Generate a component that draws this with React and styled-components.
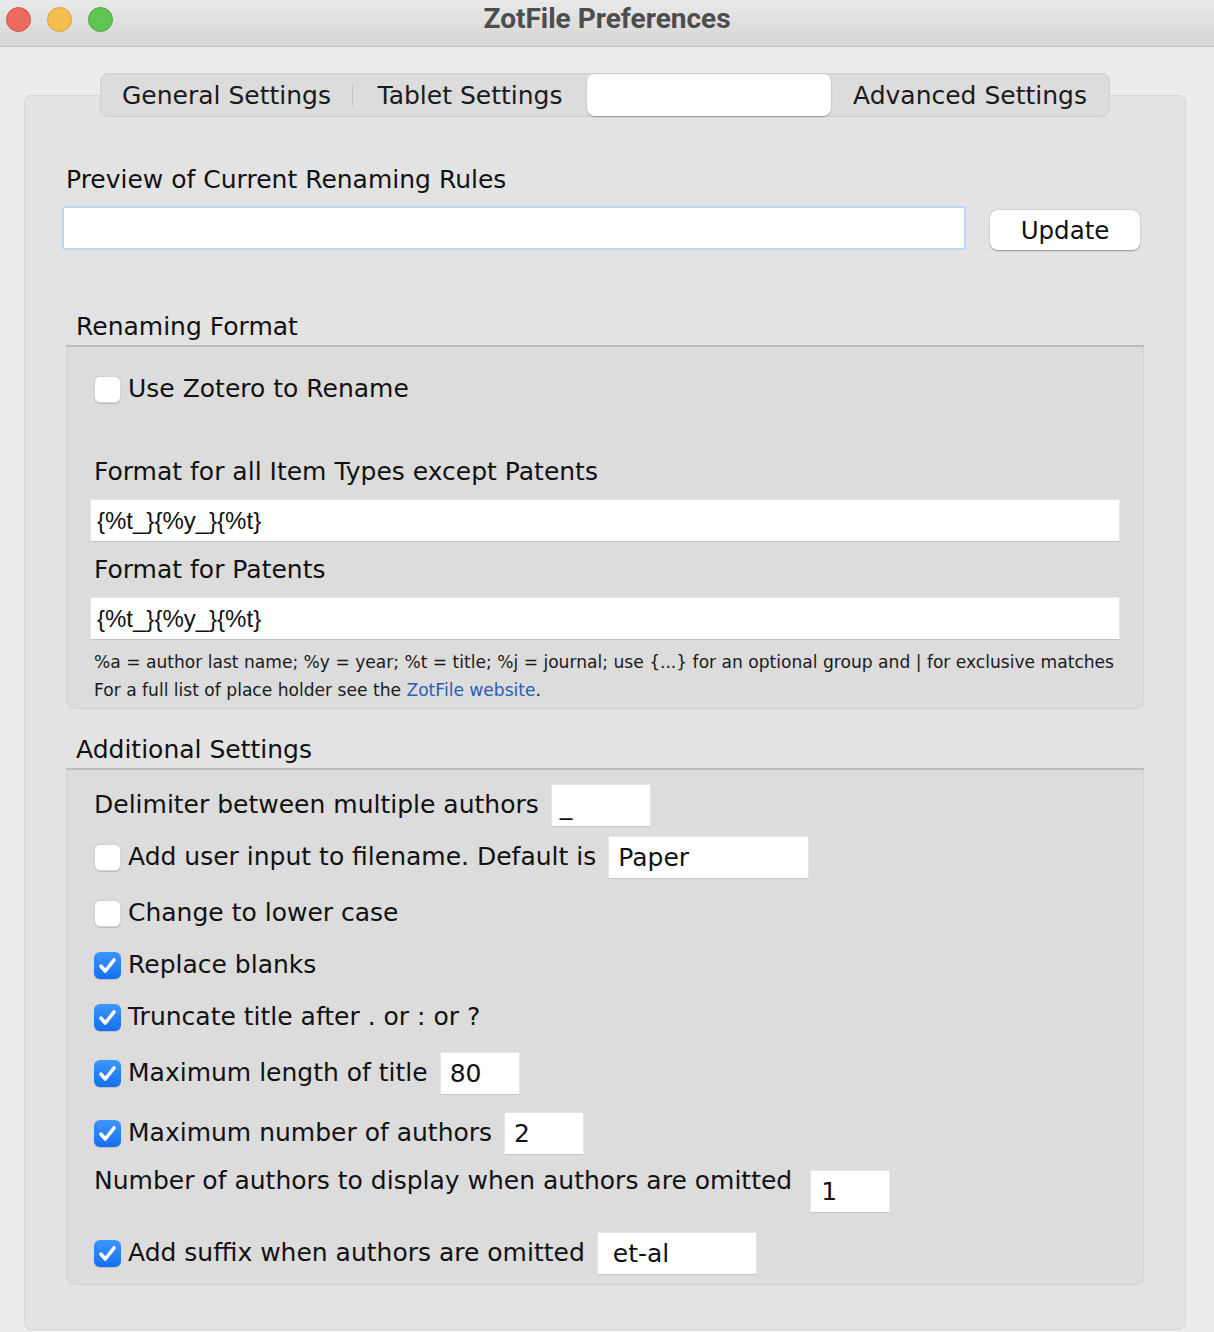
import styled, { createGlobalStyle } from "styled-components";

const GlobalStyle = createGlobalStyle`
    body {
        margin: 0;
        background: #ececec;
        font-family: "DejaVu Sans", "Noto Sans", sans-serif;
        color: #111;
    }
`;

const Window = styled.div`
    width: 1214px;
    height: 1332px;
    overflow: hidden;
    background: #ececec;
`;

const TitleBar = styled.div`
    height: 46px;
    display: grid;
    grid-template-columns: 1fr auto 1fr;
    align-items: center;
    background: linear-gradient(#e9e9e9, #d5d5d5);
    border-bottom: 1px solid #c6c6c6;
`;

const Lights = styled.div`
    display: flex;
    gap: 16px;
    padding-left: 6px;
    margin-top: -8px;
`;

const Light = styled.span`
    width: 23px;
    height: 23px;
    border-radius: 50%;
    background: ${(p) => p.$color};
    border: 0.5px solid ${(p) => p.$edge};
`;

const Title = styled.div`
    font-family: Roboto, "Liberation Sans", sans-serif;
    font-weight: 700;
    font-size: 28px;
    color: #4d4d4d;
    margin-top: -9px;
`;

const Panel = styled.div`
    box-sizing: border-box;
    margin: 48px 28px 0 24px;
    height: 1235px;
    background: #e3e3e3;
    border: 1px solid #d6d6d6;
    border-radius: 7px;
`;

const TabRow = styled.div`
    display: flex;
    justify-content: center;
    margin-top: -23px;
`;

const TabBar = styled.div`
    display: flex;
    align-items: center;
    height: 42px;
    background: #dcdcdc;
    border: 1px solid #cfcfcf;
    border-radius: 8px;
`;

const Tab = styled.div`
    height: 42px;
    display: flex;
    align-items: center;
    justify-content: center;
    box-sizing: border-box;
    width: ${(p) => p.$w}px;
    font-size: 25px;
    color: #1a1a1a;
    ${(p) =>
        p.$active &&
        `
        background: #fff;
        border-radius: 8px;
        box-shadow: 0 1px 1.5px rgba(0,0,0,0.3);
    `}
`;

const TabDivider = styled.span`
    width: 1px;
    height: 22px;
    background: #c4c4c4;
`;

const Content = styled.div`
    padding: 0 41px;
`;

const Label = styled.div`
    font-size: 25px;
    line-height: 30px;
    margin-top: ${(p) => p.$mt || 0}px;
    padding-left: ${(p) => p.$pl || 0}px;
    white-space: nowrap;
`;

const PreviewRow = styled.div`
    display: flex;
    align-items: flex-end;
    margin: 11px 4px 0 -4px;
`;

const PreviewInput = styled.div`
    flex: 1;
    height: 44px;
    box-sizing: border-box;
    background: #fff;
    border: 2px solid #bcd6f4;
    border-radius: 3px;
`;

const Button = styled.div`
    width: 150px;
    height: 40px;
    margin-left: 24px;
    display: flex;
    align-items: center;
    justify-content: center;
    background: #fff;
    border-radius: 8px;
    box-shadow: 0 0.5px 1.5px rgba(0, 0, 0, 0.35);
    font-size: 24.5px;
`;

const SectionHeader = styled.div`
    margin-top: ${(p) => p.$mt}px;
    padding: 0 10px 3px;
    font-size: 25px;
    line-height: 30px;
    border-bottom: 2px solid #bdbdbd;
`;

const Group = styled.div`
    background: #dcdcdc;
    border: 1px solid #d2d2d2;
    border-top: none;
    border-radius: 0 0 8px 8px;
    padding: ${(p) => p.$pad};
`;

const FormatInput = styled.div`
    margin-top: 12px;
    height: 43px;
    box-sizing: border-box;
    background: #fff;
    border: 1px solid #e6e6e6;
    border-bottom-color: #c4c4c4;
    padding-left: 6px;
    display: flex;
    align-items: center;
    font-family: "Liberation Sans", Arial, sans-serif;
    font-size: 24px;
`;

const Hint = styled.div`
    margin-top: 8px;
    padding-left: 4px;
    font-size: 17.1px;
    line-height: 28px;
    color: #1a1a1a;
    white-space: nowrap;
`;

const Link = styled.span`
    color: #2a5db5;
`;

const Row = styled.div`
    display: flex;
    align-items: ${(p) => (p.$top ? "flex-start" : "center")};
    height: ${(p) => p.$h}px;
    margin-top: ${(p) => p.$mt || 0}px;
`;

const Box = styled.span`
    flex: none;
    width: 27px;
    height: 27px;
    box-sizing: border-box;
    margin: 0 7px 0 4px;
    border-radius: 6px;
    display: flex;
    align-items: center;
    justify-content: center;
    background: ${(p) =>
        p.$checked ? "linear-gradient(#3d96fb, #1470ef)" : "#fff"};
    border: ${(p) => (p.$checked ? "none" : "1px solid #d4d4d4")};
    box-shadow: 0 0.5px 1px rgba(0, 0, 0, 0.15);
`;

const Field = styled.div`
    flex: none;
    width: ${(p) => p.$w}px;
    height: 43px;
    box-sizing: border-box;
    margin-left: ${(p) => p.$ml || 12}px;
    margin-top: ${(p) => p.$mt || 0}px;
    padding-left: ${(p) => p.$pl || 9}px;
    display: flex;
    align-items: center;
    background: #fff;
    border: 1px solid #e6e6e6;
    border-bottom-color: #c4c4c4;
    font-size: 25px;
`;

const Check = ({ checked }) => (
    <Box $checked={checked}>
        {checked && (
            <svg width="27" height="27" viewBox="0 0 27 27">
                <path
                    d="M7 14.2l4.3 4.8L20 8"
                    fill="none"
                    stroke="#fff"
                    strokeWidth="3.6"
                    strokeLinecap="round"
                    strokeLinejoin="round"
                />
            </svg>
        )}
    </Box>
);

const App = () => {
    return (
        <Window>
            <GlobalStyle />
            <TitleBar>
                <Lights>
                    <Light $color="#ed6a5e" $edge="#d55347" />
                    <Light $color="#f5bf4f" $edge="#d9a136" />
                    <Light $color="#61c554" $edge="#4ba83e" />
                </Lights>
                <Title>ZotFile Preferences</Title>
                <div />
            </TitleBar>

            <Panel>
                <TabRow>
                    <TabBar>
                        <Tab $w={251}>General Settings</Tab>
                        <TabDivider />
                        <Tab $w={234}>Tablet Settings</Tab>
                        <Tab $w={244} $active />
                        <Tab $w={278}>Advanced Settings</Tab>
                    </TabBar>
                </TabRow>

                <Content>
                    <Label $mt={48}>Preview of Current Renaming Rules</Label>
                    <PreviewRow>
                        <PreviewInput />
                        <Button>Update</Button>
                    </PreviewRow>

                    <SectionHeader $mt={62}>Renaming Format</SectionHeader>
                    <Group $pad="28px 23px 4px">
                        <Row $h={28}>
                            <Check />
                            <Label>Use Zotero to Rename</Label>
                        </Row>
                        <Label $mt={54} $pl={4}>
                            Format for all Item Types except Patents
                        </Label>
                        <FormatInput>{"{%t_}{%y_}{%t}"}</FormatInput>
                        <Label $mt={13} $pl={4}>
                            Format for Patents
                        </Label>
                        <FormatInput>{"{%t_}{%y_}{%t}"}</FormatInput>
                        <Hint>
                            %a = author last name; %y = year; %t = title; %j =
                            journal; use {"{...}"} for an optional group and |
                            for exclusive matches
                            <br />
                            For a full list of place holder see the{" "}
                            <Link>ZotFile website</Link>.
                        </Hint>
                    </Group>

                    <SectionHeader $mt={26}>Additional Settings</SectionHeader>
                    <Group $pad="10px 23px 8px">
                        <Row $h={50}>
                            <Label $pl={4}>
                                Delimiter between multiple authors
                            </Label>
                            <Field $w={100} $pl={8}>
                                _
                            </Field>
                        </Row>
                        <Row $h={54}>
                            <Check />
                            <Label>Add user input to filename. Default is</Label>
                            <Field $w={201}>Paper</Field>
                        </Row>
                        <Row $h={58}>
                            <Check />
                            <Label>Change to lower case</Label>
                        </Row>
                        <Row $h={46}>
                            <Check checked />
                            <Label>Replace blanks</Label>
                        </Row>
                        <Row $h={58}>
                            <Check checked />
                            <Label>Truncate title after . or : or ?</Label>
                        </Row>
                        <Row $h={54}>
                            <Check checked />
                            <Label>Maximum length of title</Label>
                            <Field $w={80}>80</Field>
                        </Row>
                        <Row $h={66}>
                            <Check checked />
                            <Label>Maximum number of authors</Label>
                            <Field $w={80}>2</Field>
                        </Row>
                        <Row $h={50} $top>
                            <Label $pl={4}>
                                Number of authors to display when authors are
                                omitted
                            </Label>
                            <Field $w={80} $mt={4} $ml={18} $pl={10}>
                                1
                            </Field>
                        </Row>
                        <Row $h={46} $mt={14}>
                            <Check checked />
                            <Label>Add suffix when authors are omitted</Label>
                            <Field $w={160} $pl={15}>
                                et-al
                            </Field>
                        </Row>
                    </Group>
                </Content>
            </Panel>
        </Window>
    );
};

export default App;
